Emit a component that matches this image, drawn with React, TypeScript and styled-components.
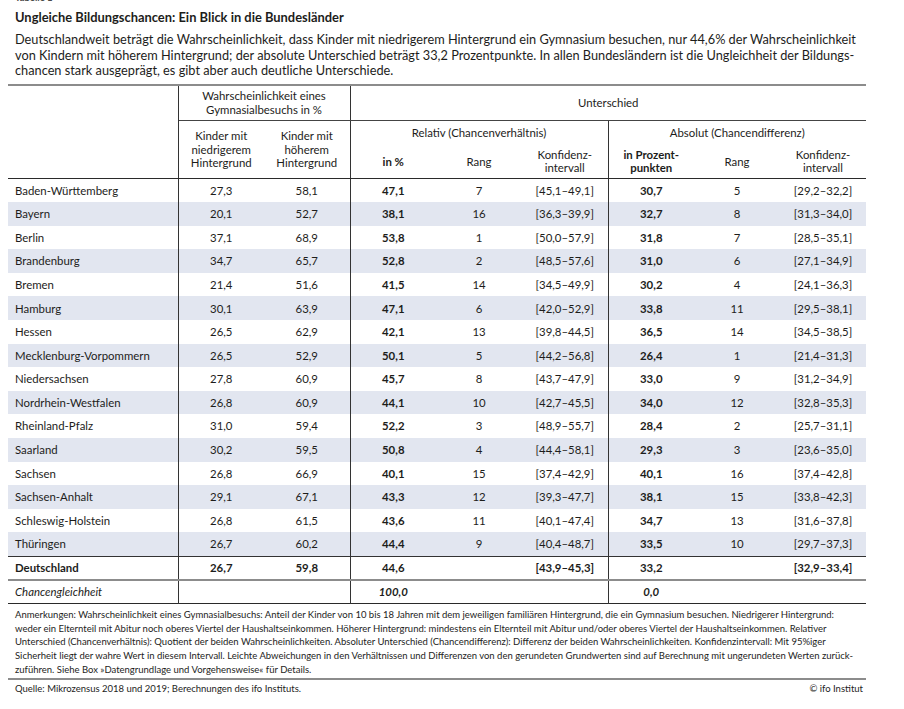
import React from "react";
import styled, { createGlobalStyle } from "styled-components";

const GlobalStyle = createGlobalStyle`
  html, body { margin: 0; padding: 0; background: #ffffff; }
  body { font-family: Lato, "Noto Sans", sans-serif; color: #1d1d1b; }
`;

const Page = styled.div`
  width: 858px;
  padding: 0 0 0 8px;
`;

const Label = styled.div`
  margin-top: -8px;
  padding-left: 7px;
  font-size: 9.5px;
  line-height: 11px;
  font-weight: 700;
  color: #4a4a4a;
`;

const Title = styled.h1`
  margin: 0;
  padding: 6px 0 0 7px;
  font-size: 12.9px;
  line-height: 16px;
  font-weight: 700;
`;

const Lead = styled.p`
  margin: 7px 0 5px;
  padding-left: 7px;
  font-size: 12.75px;
  line-height: 15.5px;
  white-space: nowrap;
`;

const Table = styled.table`
  width: 858px;
  table-layout: fixed;
  border-collapse: collapse;
  font-size: 11.4px;
  line-height: 13.5px;
  border-top: 2px solid #8c8c8c;
`;

const Col = styled.col<{ $w: number }>`
  width: ${(p) => p.$w}px;
`;

const HeadRow = styled.tr<{ $h: number }>`
  height: ${(p) => p.$h}px;
`;

const Th = styled.th<{ $right?: boolean; $bottom?: boolean; $bold?: boolean; $end?: boolean }>`
  padding: 0 3px;
  font-weight: ${(p) => (p.$bold ? 700 : 400)};
  text-align: center;
  vertical-align: middle;
  border-right: ${(p) => (p.$right ? "1px solid #333" : "none")};
  border-bottom: ${(p) =>
    p.$end ? "1.5px solid #2a2a2a" : p.$bottom ? "1px solid #444" : "none"};
`;

const BodyRow = styled.tr<{ $shade?: boolean; $h?: number; $line?: "dark" | "gray" }>`
  height: ${(p) => p.$h ?? 23.6}px;
  background: ${(p) => (p.$shade ? "#e2e6f0" : "transparent")};
  border-top: ${(p) =>
    p.$line === "dark" ? "1px solid #333" : p.$line === "gray" ? "2px solid #8c8c8c" : "none"};
`;

const Td = styled.td<{ $name?: boolean; $bold?: boolean; $italic?: boolean; $right?: boolean }>`
  padding: 0 ${(p) => (p.$name ? "0 0 7px" : "3px")};
  text-align: ${(p) => (p.$name ? "left" : "center")};
  font-weight: ${(p) => (p.$bold ? 700 : 400)};
  font-style: ${(p) => (p.$italic ? "italic" : "normal")};
  border-right: ${(p) => (p.$right ? "1px solid #333" : "none")};
  white-space: nowrap;
  vertical-align: middle;
`;

const Foot = styled.tfoot`
  border-bottom: 1.5px solid #2a2a2a;
`;

const Notes = styled.div`
  padding: 4px 0 1px 7px;
  font-size: 9.5px;
  line-height: 13.7px;
  white-space: nowrap;
  border-bottom: 2px solid #8c8c8c;
`;

const Source = styled.div`
  display: flex;
  justify-content: space-between;
  padding: 2px 3px 0 7px;
  font-size: 9.5px;
  line-height: 13.7px;
`;

type RowData = [string, string, string, string, string, string, string, string, string];

const rows: RowData[] = [
  ["Baden-Württemberg", "27,3", "58,1", "47,1", "7", "[45,1–49,1]", "30,7", "5", "[29,2–32,2]"],
  ["Bayern", "20,1", "52,7", "38,1", "16", "[36,3–39,9]", "32,7", "8", "[31,3–34,0]"],
  ["Berlin", "37,1", "68,9", "53,8", "1", "[50,0–57,9]", "31,8", "7", "[28,5–35,1]"],
  ["Brandenburg", "34,7", "65,7", "52,8", "2", "[48,5–57,6]", "31,0", "6", "[27,1–34,9]"],
  ["Bremen", "21,4", "51,6", "41,5", "14", "[34,5–49,9]", "30,2", "4", "[24,1–36,3]"],
  ["Hamburg", "30,1", "63,9", "47,1", "6", "[42,0–52,9]", "33,8", "11", "[29,5–38,1]"],
  ["Hessen", "26,5", "62,9", "42,1", "13", "[39,8–44,5]", "36,5", "14", "[34,5–38,5]"],
  ["Mecklenburg-Vorpommern", "26,5", "52,9", "50,1", "5", "[44,2–56,8]", "26,4", "1", "[21,4–31,3]"],
  ["Niedersachsen", "27,8", "60,9", "45,7", "8", "[43,7–47,9]", "33,0", "9", "[31,2–34,9]"],
  ["Nordrhein-Westfalen", "26,8", "60,9", "44,1", "10", "[42,7–45,5]", "34,0", "12", "[32,8–35,3]"],
  ["Rheinland-Pfalz", "31,0", "59,4", "52,2", "3", "[48,9–55,7]", "28,4", "2", "[25,7–31,1]"],
  ["Saarland", "30,2", "59,5", "50,8", "4", "[44,4–58,1]", "29,3", "3", "[23,6–35,0]"],
  ["Sachsen", "26,8", "66,9", "40,1", "15", "[37,4–42,9]", "40,1", "16", "[37,4–42,8]"],
  ["Sachsen-Anhalt", "29,1", "67,1", "43,3", "12", "[39,3–47,7]", "38,1", "15", "[33,8–42,3]"],
  ["Schleswig-Holstein", "26,8", "61,5", "43,6", "11", "[40,1–47,4]", "34,7", "13", "[31,6–37,8]"],
  ["Thüringen", "26,7", "60,2", "44,4", "9", "[40,4–48,7]", "33,5", "10", "[29,7–37,3]"],
];

const total: RowData = ["Deutschland", "26,7", "59,8", "44,6", "", "[43,9–45,3]", "33,2", "", "[32,9–33,4]"];
const equal: RowData = ["Chancengleichheit", "", "", "100,0", "", "", "0,0", "", ""];

const rightBorderCols = new Set([0, 2, 5]);
const boldCols = new Set([3, 6]);

function DataRow({ data, shade, allBold, italic, h, line }: {
  data: RowData; shade?: boolean; allBold?: boolean; italic?: boolean; h?: number; line?: "dark" | "gray";
}) {
  return (
    <BodyRow $shade={shade} $h={h} $line={line}>
      {data.map((v, i) => (
        <Td
          key={i}
          $name={i === 0}
          $bold={allBold || boldCols.has(i)}
          $italic={italic}
          $right={rightBorderCols.has(i)}
        >
          {v}
        </Td>
      ))}
    </BodyRow>
  );
}

export default function App() {
  return (
    <Page>
      <GlobalStyle />
      <Label>Tabelle 1</Label>
      <Title>Ungleiche Bildungschancen: Ein Blick in die Bundesländer</Title>
      <Lead>
        Deutschlandweit beträgt die Wahrscheinlichkeit, dass Kinder mit niedrigerem Hintergrund ein Gymnasium besuchen, nur 44,6% der Wahrscheinlichkeit
        <br />
        von Kindern mit höherem Hintergrund; der absolute Unterschied beträgt 33,2 Prozentpunkte. In allen Bundesländern ist die Ungleichheit der Bildungs-
        <br />
        chancen stark ausgeprägt, es gibt aber auch deutliche Unterschiede.
      </Lead>
      <Table>
        <colgroup>
          <Col $w={170} />
          <Col $w={86} />
          <Col $w={86} />
          <Col $w={86} />
          <Col $w={86} />
          <Col $w={86} />
          <Col $w={86} />
          <Col $w={86} />
          <Col $w={86} />
        </colgroup>
        <thead>
          <HeadRow $h={36}>
            <Th rowSpan={3} $right $end />
            <Th colSpan={2} $right $bottom>
              Wahrscheinlichkeit eines
              <br />
              Gymnasialbesuchs in %
            </Th>
            <Th colSpan={6} $bottom>Unterschied</Th>
          </HeadRow>
          <HeadRow $h={24}>
            <Th rowSpan={2} $end>
              Kinder mit
              <br />
              niedrigerem
              <br />
              Hintergrund
            </Th>
            <Th rowSpan={2} $right $end>
              Kinder mit
              <br />
              höherem
              <br />
              Hintergrund
            </Th>
            <Th colSpan={3} $right>Relativ (Chancenverhältnis)</Th>
            <Th colSpan={3}>Absolut (Chancendifferenz)</Th>
          </HeadRow>
          <HeadRow $h={34}>
            <Th $bold $end>in %</Th>
            <Th $end>Rang</Th>
            <Th $right $end>
              Konfidenz-
              <br />
              intervall
            </Th>
            <Th $bold $end>
              in Prozent-
              <br />
              punkten
            </Th>
            <Th $end>Rang</Th>
            <Th $end>
              Konfidenz-
              <br />
              intervall
            </Th>
          </HeadRow>
        </thead>
        <tbody>
          {rows.map((r, i) => (
            <DataRow key={r[0]} data={r} shade={i % 2 === 1} />
          ))}
        </tbody>
        <Foot>
          <DataRow data={total} allBold h={24} line="dark" />
          <DataRow data={equal} italic h={23.5} line="gray" />
        </Foot>
      </Table>
      <Notes>
        Anmerkungen: Wahrscheinlichkeit eines Gymnasialbesuchs: Anteil der Kinder von 10 bis 18 Jahren mit dem jeweiligen familiären Hintergrund, die ein Gymnasium besuchen. Niedrigerer Hintergrund:
        <br />
        weder ein Elternteil mit Abitur noch oberes Viertel der Haushaltseinkommen. Höherer Hintergrund: mindestens ein Elternteil mit Abitur und/oder oberes Viertel der Haushaltseinkommen. Relativer
        <br />
        Unterschied (Chancenverhältnis): Quotient der beiden Wahrscheinlichkeiten. Absoluter Unterschied (Chancendifferenz): Differenz der beiden Wahrscheinlichkeiten. Konfidenzintervall: Mit 95%iger
        <br />
        Sicherheit liegt der wahre Wert in diesem Intervall. Leichte Abweichungen in den Verhältnissen und Differenzen von den gerundeten Grundwerten sind auf Berechnung mit ungerundeten Werten zurück-
        <br />
        zuführen. Siehe Box »Datengrundlage und Vorgehensweise« für Details.
      </Notes>
      <Source>
        <span>Quelle: Mikrozensus 2018 und 2019; Berechnungen des ifo Instituts.</span>
        <span>© ifo Institut</span>
      </Source>
    </Page>
  );
}
